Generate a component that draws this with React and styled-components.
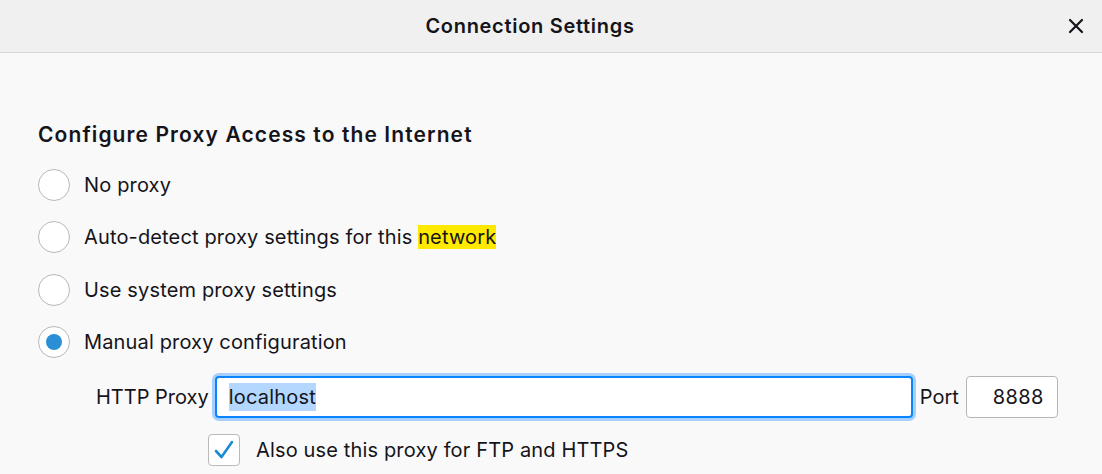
import React from "react"
import styled, { createGlobalStyle } from 'styled-components'

const GlobalStyle = createGlobalStyle`
  html, body {
    margin: 0;
    padding: 0;
    background: #f9f9f9;
    font-family: Inter, "Noto Sans", sans-serif;
    color: #15141a;
  }
`

function App() {
  return (
    <Dialog>
      <GlobalStyle />
      <Header>
        <Title>Connection Settings</Title>
        <CloseButton aria-label="Close">
          <svg width="18" height="18" viewBox="0 0 18 18">
            <path d="M3 3 L15 15 M15 3 L3 15" stroke="#15141a" strokeWidth="2.2" strokeLinecap="round" />
          </svg>
        </CloseButton>
      </Header>
      <Body>
        <Heading>Configure Proxy Access to the Internet</Heading>
        <RadioGroup>
          <RadioRow>
            <Radio />
            <Label>No proxy</Label>
          </RadioRow>
          <RadioRow>
            <Radio />
            <Label>Auto-detect proxy settings for this <Highlight>network</Highlight></Label>
          </RadioRow>
          <RadioRow>
            <Radio />
            <Label>Use system proxy settings</Label>
          </RadioRow>
          <RadioRow>
            <Radio checked />
            <Label>Manual proxy configuration</Label>
          </RadioRow>
        </RadioGroup>
        <ProxyRow>
          <FieldLabel>HTTP Proxy</FieldLabel>
          <HostInput>
            <Selected>localhost</Selected>
          </HostInput>
          <FieldLabel>Port</FieldLabel>
          <PortInput>8888</PortInput>
        </ProxyRow>
        <CheckRow>
          <Checkbox>
            <svg width="22" height="22" viewBox="0 0 22 22">
              <path d="M3 12 L8.5 18 L19 3" fill="none" stroke="#1c8bd4" strokeWidth="2.6" strokeLinecap="round" strokeLinejoin="round" />
            </svg>
          </Checkbox>
          <Label>Also use this proxy for FTP and HTTPS</Label>
        </CheckRow>
      </Body>
    </Dialog>
  )
}

const Dialog = styled.div`
  width: 1102px;
  height: 474px;
  overflow: hidden;
  background: #f9f9f9;
`

const Header = styled.div`
  height: 52px;
  background: #f0f0f0;
  border-bottom: 1px solid #d7d7d9;
  display: flex;
  align-items: center;
`

const Title = styled.div`
  flex: 1;
  text-align: center;
  font-size: 20px;
  font-weight: 600;
  letter-spacing: 0.7px;
`

const CloseButton = styled.div`
  width: 18px;
  height: 18px;
  margin: 0 17px 0 7px;
  display: flex;
`

const Body = styled.div`
  padding: 68px 0 0 38px;
`

const Heading = styled.div`
  font-size: 21px;
  font-weight: 600;
  letter-spacing: 1.1px;
  line-height: 28px;
  margin-bottom: 20px;
`

const RadioGroup = styled.div`
  display: flex;
  flex-direction: column;
  gap: 20.4px;
`

const RadioRow = styled.div`
  display: flex;
  align-items: center;
  gap: 14px;
  height: 32px;
`

const Radio = styled.div`
  width: 30px;
  height: 30px;
  border: 1px solid #b9b9bb;
  border-radius: 50%;
  background: #fff;
  display: flex;
  align-items: center;
  justify-content: center;

  &::after {
    content: "";
    display: ${p => (p.checked ? 'block' : 'none')};
    width: 16px;
    height: 16px;
    border-radius: 50%;
    background: #2a8fd6;
  }
`

const Label = styled.span`
  font-size: 20px;
  letter-spacing: 0.15px;
  line-height: 26px;
`

const Highlight = styled.span`
  background: #ffe900;
`

const ProxyRow = styled.div`
  display: flex;
  align-items: center;
  margin: 18px 0 0 58px;
`

const FieldLabel = styled.span`
  font-size: 20px;
`

const HostInput = styled.div`
  width: 698px;
  height: 42px;
  box-sizing: border-box;
  margin: 0 7px 0 6px;
  border: 2px solid #0a84ff;
  border-radius: 4px;
  box-shadow: 0 0 0 3px #a6d0fb;
  background: #fff;
  display: flex;
  align-items: center;
  padding-left: 12px;
  font-size: 20px;
  letter-spacing: 0.2px;
`

const Selected = styled.span`
  background: #b3d7ff;
  line-height: 28px;
`

const PortInput = styled.div`
  width: 92px;
  height: 42px;
  box-sizing: border-box;
  margin-left: 7px;
  border: 1px solid #b5b5b7;
  border-radius: 4px;
  background: #fff;
  display: flex;
  align-items: center;
  justify-content: flex-end;
  padding-right: 13px;
  font-size: 20px;
  letter-spacing: 0.4px;
`

const CheckRow = styled.div`
  display: flex;
  align-items: center;
  gap: 16px;
  margin: 16px 0 0 170px;
`

const Checkbox = styled.div`
  width: 32px;
  height: 32px;
  box-sizing: border-box;
  border: 1px solid #b9b9bb;
  border-radius: 4px;
  background: #fff;
  display: flex;
  align-items: center;
  justify-content: center;
`

export default App
